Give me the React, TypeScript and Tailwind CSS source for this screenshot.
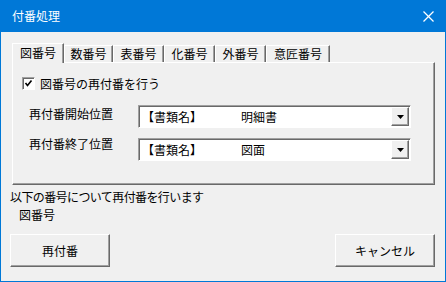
import React from "react";

const raised =
  "border border-t-white border-l-white border-r-[#696969] border-b-[#696969] shadow-[inset_-1px_-1px_0_#a0a0a0]";

function Combo({ value }: { value: string }) {
  return (
    <div className="w-[273px] h-[23px] flex border border-t-[#a0a0a0] border-l-[#a0a0a0] border-b-white border-r-white shadow-[inset_1px_1px_0_#696969] bg-white">
      <div className="flex-1 flex items-center pl-[3px] pt-[1px]">
        <span className="w-[99px]">【書類名】</span>
        <span>{value}</span>
      </div>
      <div className={`w-[18px] h-[19px] mt-[1px] mr-[1px] bg-[#f0f0f0] flex items-center justify-center ${raised}`}>
        <svg width="7" height="4" viewBox="0 0 7 4">
          <polygon points="0,0 7,0 3.5,4" fill="#000" />
        </svg>
      </div>
    </div>
  );
}

function Tab({ label, w, active }: { label: string; w: string; active?: boolean }) {
  if (active) {
    return (
      <div
        className={`${w} h-[20px] -mb-px relative z-10 bg-[#f0f0f0] border border-b-0 border-t-white border-l-white border-r-[#696969] shadow-[inset_-1px_0_0_#a0a0a0] flex items-center justify-center pb-[1px]`}
      >
        {label}
      </div>
    );
  }
  return (
    <div
      className={`${w} h-[17px] border border-b-0 border-t-white border-l-white border-r-[#696969] shadow-[inset_-1px_0_0_#a0a0a0] flex items-center justify-center`}
    >
      {label}
    </div>
  );
}

export default function App() {
  return (
    <div className="w-[446px] h-[282px] flex flex-col bg-[#f0f0f0] text-black text-[12px] leading-[16px] font-['Noto_Sans_CJK_JP','Noto_Sans',sans-serif] overflow-hidden">
      <div className="h-[32px] shrink-0 bg-[#0078d7] flex items-center justify-between pl-[12px] pr-[12px] text-white">
        <span className="text-[12px]">付番処理</span>
        <svg width="11" height="11" viewBox="0 0 11 11">
          <line x1="0.5" y1="0.5" x2="10.5" y2="10.5" stroke="#fff" strokeWidth="1.2" />
          <line x1="10.5" y1="0.5" x2="0.5" y2="10.5" stroke="#fff" strokeWidth="1.2" />
        </svg>
      </div>
      <div className="flex-1 flex flex-col border-l border-r border-b border-[#0078d7] pl-[11px] pr-[10px]">
        <div className="flex items-end h-[20px] mt-[10px]">
          <Tab label="図番号" w="w-[52px]" active />
          <Tab label="数番号" w="w-[49px]" />
          <Tab label="表番号" w="w-[51px]" />
          <Tab label="化番号" w="w-[51px]" />
          <Tab label="外番号" w="w-[51px]" />
          <Tab label="意匠番号" w="w-[64px]" />
        </div>
        <div className={`w-[423px] h-[123px] ${raised} pt-[14px] pl-[9px]`}>
          <div className="flex items-center h-[13px]">
            <div className="w-[13px] h-[13px] bg-white border border-t-[#a0a0a0] border-l-[#a0a0a0] border-b-white border-r-white shadow-[inset_1px_1px_0_#696969] flex items-center justify-center">
              <svg width="9" height="9" viewBox="0 0 9 9">
                <polyline points="1.5,4 3.5,6.5 7.5,1.5" fill="none" stroke="#000" strokeWidth="1.6" />
              </svg>
            </div>
            <span className="ml-[5px]">図番号の再付番を行う</span>
          </div>
          <div className="flex items-center mt-[15px] pl-[7px]">
            <span className="w-[109px] -mt-[6px]">再付番開始位置</span>
            <Combo value="明細書" />
          </div>
          <div className="flex items-center mt-[10px] pl-[7px]">
            <span className="w-[109px] -mt-[12px]">再付番終了位置</span>
            <Combo value="図面" />
          </div>
        </div>
        <div className="mt-[4px] -ml-[2px] tracking-[-0.6px]">以下の番号について再付番を行います</div>
        <div className="mt-[2px] ml-[7px]">図番号</div>
        <div className="flex justify-between mt-[11px] -ml-[2px]">
          <button className={`w-[100px] h-[33px] bg-[#f0f0f0] ${raised} flex items-center justify-center`}>再付番</button>
          <button className={`w-[100px] h-[33px] bg-[#f0f0f0] ${raised} flex items-center justify-center`}>キャンセル</button>
        </div>
      </div>
    </div>
  );
}
